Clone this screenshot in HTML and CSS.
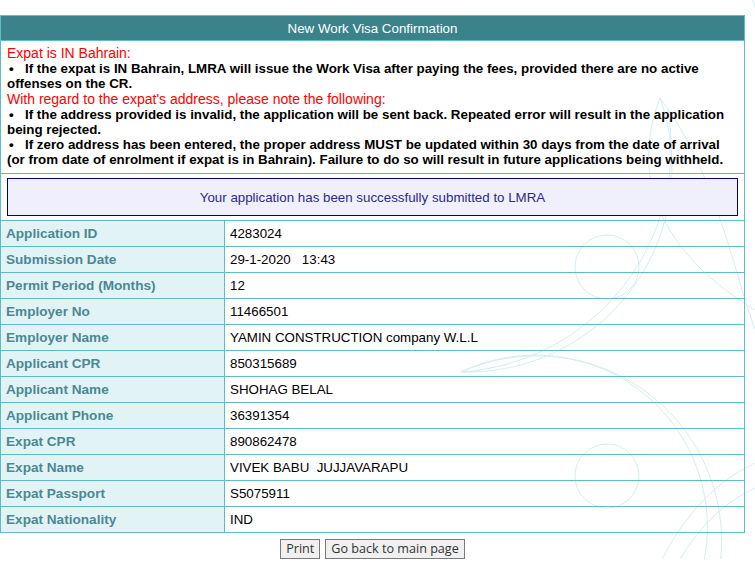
FILE: index.html
```html
<!DOCTYPE html>
<html>
<head>
<meta charset="utf-8">
<title>New Work Visa Confirmation</title>
<link rel="stylesheet" href="styles.css">
</head>
<body>
<svg class="watermark" width="755" height="577" viewBox="0 0 755 577" aria-hidden="true">
  <g fill="none" stroke="#d2eef1" stroke-width="1">
    <circle cx="607" cy="267" r="32"/>
    <circle cx="607" cy="476" r="32"/>
    <path d="M461 372 A185 185 0 0 1 718 577"/>
    <path d="M461 372 A172 172 0 0 1 700 577"/>
    <path d="M461 372 A205 205 0 0 0 660 98"/>
    <path d="M461 372 A225 225 0 0 0 668 110"/>
    <path d="M660 98 C640 150 642 210 700 268 C720 288 740 300 755 310"/>
    <path d="M660 98 C700 150 722 220 745 300 L755 330"/>
    <path d="M653 577 C680 520 710 485 755 463"/>
    <path d="M670 577 C695 530 720 505 755 488"/>
    <path d="M752 0 C754 3 755 5 755 8"/>
  </g>
</svg>
<table class="sheet">
  <tr><th colspan="2" class="title">New Work Visa Confirmation</th></tr>
  <tr>
    <td colspan="2" class="notice">
      <div class="red">Expat is IN Bahrain:</div>
      <div class="b">If the expat is IN Bahrain, LMRA will issue the Work Visa after paying the fees, provided there are no active offenses on the CR.</div>
      <div class="red">With regard to the expat's address, please note the following:</div>
      <div class="b">If the address provided is invalid, the application will be sent back. Repeated error will result in the application being rejected.</div>
      <div class="b">If zero address has been entered, the proper address MUST be updated within 30 days from the date of arrival (or from date of enrolment if expat is in Bahrain). Failure to do so will result in future applications being withheld.</div>
    </td>
  </tr>
  <tr>
    <td colspan="2" class="msgcell"><div class="msg">Your application has been successfully submitted to LMRA</div></td>
  </tr>
  <tr><td class="lbl">Application ID</td><td class="val">4283024</td></tr>
  <tr><td class="lbl">Submission Date</td><td class="val">29-1-2020&nbsp;&nbsp;&nbsp;13:43</td></tr>
  <tr><td class="lbl">Permit Period (Months)</td><td class="val">12</td></tr>
  <tr><td class="lbl">Employer No</td><td class="val">11466501</td></tr>
  <tr><td class="lbl">Employer Name</td><td class="val">YAMIN CONSTRUCTION company W.L.L</td></tr>
  <tr><td class="lbl">Applicant CPR</td><td class="val">850315689</td></tr>
  <tr><td class="lbl">Applicant Name</td><td class="val">SHOHAG BELAL</td></tr>
  <tr><td class="lbl">Applicant Phone</td><td class="val">36391354</td></tr>
  <tr><td class="lbl">Expat CPR</td><td class="val">890862478</td></tr>
  <tr><td class="lbl">Expat Name</td><td class="val">VIVEK BABU&nbsp; JUJJAVARAPU</td></tr>
  <tr><td class="lbl">Expat Passport</td><td class="val">S5075911</td></tr>
  <tr><td class="lbl">Expat Nationality</td><td class="val">IND</td></tr>
</table>
<div class="actions">
  <button class="btn">Print</button>
  <button class="btn">Go back to main page</button>
</div>
</body>
</html>
```
FILE: styles.css
```css
html {
  background: #ffffff;
}
html, body {
  margin: 0;
  padding: 0;
}
body {
  position: relative;
  padding-top: 15px;
  font-family: "Liberation Sans", Arial, sans-serif;
  font-size: 13.33px;
  color: #000;
}
.watermark {
  position: absolute;
  top: 0;
  left: 0;
  z-index: -1;
}
.sheet {
  width: 745px;
  border-collapse: collapse;
  border: 1px solid #5fbbc5;
}
.sheet td, .sheet th {
  border: 1px solid #5fbbc5;
  padding: 0;
}
.title {
  background: #3b828b;
  color: #fff;
  font-weight: normal;
  font-size: 13.33px;
  height: 24px;
  text-align: center;
  vertical-align: middle;
}
.notice {
  padding: 4px 5px 6px 6px !important;
  text-align: left;
}
.red {
  color: #ff0000;
  font-size: 14px;
  line-height: 16px;
}
.b {
  font-weight: bold;
  font-size: 13.33px;
  line-height: 15px;
}
.b::before {
  content: "\2022";
  display: inline-block;
  width: 16px;
  padding-left: 2px;
}
.msgcell {
  padding: 4px 6px 4px 6px !important;
}
.msg {
  border: 1px solid #000080;
  background: #f0f0fc;
  color: #2b2b86;
  text-align: center;
  height: 36px;
  line-height: 38px;
  font-size: 13.33px;
}
.lbl {
  width: 218px;
  height: 25px;
  background: #e2f3f6;
  color: #4a8893;
  font-weight: bold;
  font-size: 13.6px;
  padding-left: 5px !important;
}
.val {
  height: 25px;
  padding-left: 5px !important;
  font-size: 13.33px;
}
.actions {
  width: 745px;
  display: flex;
  justify-content: center;
  gap: 5px;
  margin-top: 6px;
}
.btn {
  font-family: "Open Sans", "Noto Sans", sans-serif;
  font-size: 12.6px;
  color: #333;
  background: #f0f0f0;
  border: 1px solid #7a7a7a;
  border-radius: 0;
  height: 20px;
  padding: 0 5px;
  line-height: 16px;
}
```
